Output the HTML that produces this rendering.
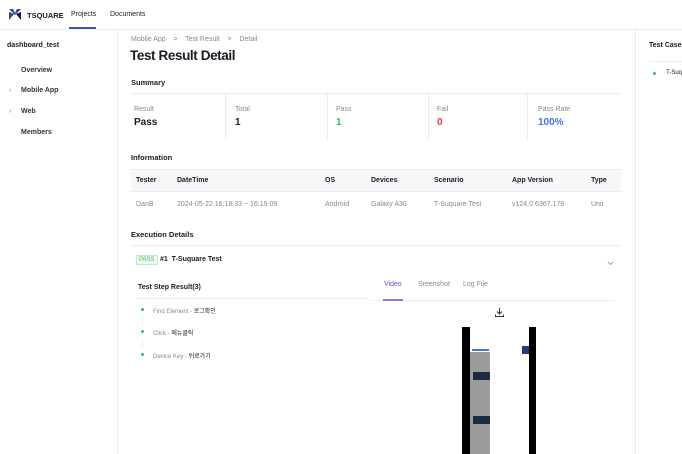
<!DOCTYPE html>
<html><head><meta charset="utf-8"><style>
*{box-sizing:border-box;margin:0;padding:0}
body{width:682px;height:454px;overflow:hidden;background:#fff;font-family:"Liberation Sans","Noto Sans CJK KR",sans-serif;color:#1a1a24;position:relative;font-size:7px}
.a{position:absolute;white-space:nowrap}
.b{font-weight:bold}
.g{color:#888}
.hl{position:absolute;height:1px;background:#ececf0}
.vl{position:absolute;width:1px;background:#ececf0}
</style></head><body>
<svg class="a" style="left:9px;top:9px" width="12" height="11" viewBox="0 0 12 11"><path d="M0 0h4l2 4 2-4h4L6 6z" fill="#2c4a8c"/><path d="M0 11 5 5 0 3z" fill="#2c4a8c"/><path d="M12 11 7 5l5-2z" fill="#1a1a24"/></svg>
<div class="a b" style="left:27px;top:11px;font-size:7.5px">TSQUARE</div>
<div class="a" style="left:71px;top:11px;font-size:7px">Projects</div>
<div class="a" style="left:69px;top:27px;width:27px;height:2px;background:#3b55b0"></div>
<div class="a" style="left:110px;top:11px;font-size:7px">Documents</div>
<div class="hl" style="left:0;top:29px;width:682px"></div>
<div class="vl" style="left:117px;top:29px;height:425px"></div>
<div class="a b" style="left:7px;top:42px;font-size:7px">dashboard_test</div>
<div class="a" style="left:21px;top:67px;font-weight:bold;color:#333">Overview</div>
<div class="a g" style="left:9px;top:87px">›</div><div class="a" style="left:21px;top:87px;font-weight:bold;color:#333">Mobile App</div>
<div class="a g" style="left:9px;top:108px">›</div><div class="a" style="left:21px;top:108px;font-weight:bold;color:#333">Web</div>
<div class="a" style="left:21px;top:129px;font-weight:bold;color:#333">Members</div>
<div class="a g" style="left:131px;top:36px">Mobile App &nbsp;&nbsp;&nbsp;&gt;&nbsp;&nbsp;&nbsp; Test Result &nbsp;&nbsp;&nbsp;&gt;&nbsp;&nbsp;&nbsp; Detail</div>
<div class="a b" style="left:130px;top:48px;font-size:13.5px;letter-spacing:-0.4px">Test Result Detail</div>
<div class="a b" style="left:131px;top:78px;font-size:7.5px">Summary</div>
<div class="hl" style="left:131px;top:93px;width:490px"></div>
<div class="vl" style="left:225px;top:93px;height:47px"></div>
<div class="vl" style="left:327px;top:93px;height:47px"></div>
<div class="vl" style="left:428px;top:93px;height:47px"></div>
<div class="vl" style="left:527px;top:93px;height:47px"></div>
<div class="a g" style="left:134px;top:106px">Result</div><div class="a b" style="left:134px;top:117px;font-size:10px">Pass</div>
<div class="a g" style="left:235px;top:106px">Total</div><div class="a b" style="left:235px;top:117px;font-size:10px">1</div>
<div class="a g" style="left:336px;top:106px">Pass</div><div class="a b" style="left:336px;top:117px;font-size:10px;color:#3cba5a">1</div>
<div class="a g" style="left:437px;top:106px">Fail</div><div class="a b" style="left:437px;top:117px;font-size:10px;color:#e03a48">0</div>
<div class="a g" style="left:538px;top:106px">Pass Rate</div><div class="a b" style="left:538px;top:117px;font-size:10px;color:#4a72e8">100%</div>
<div class="a b" style="left:131px;top:153px;font-size:7.5px">Information</div>
<div class="a" style="left:131px;top:169px;width:490px;height:23px;background:#f6f7f9;border-bottom:1px solid #ececf0"></div>
<div class="hl" style="left:131px;top:169px;width:490px"></div>
<div class="a b" style="left:136px;top:177px">Tester</div>
<div class="a b" style="left:177px;top:177px">DateTime</div>
<div class="a b" style="left:325px;top:177px">OS</div>
<div class="a b" style="left:371px;top:177px">Devices</div>
<div class="a b" style="left:434px;top:177px">Scenario</div>
<div class="a b" style="left:512px;top:177px">App Version</div>
<div class="a b" style="left:591px;top:177px">Type</div>
<div class="a g" style="left:136px;top:201px">DanB</div>
<div class="a g" style="left:177px;top:201px">2024-05-22 16:18:33 ~ 16:19:09</div>
<div class="a g" style="left:325px;top:201px">Android</div>
<div class="a g" style="left:371px;top:201px">Galaxy A30</div>
<div class="a g" style="left:434px;top:201px">T-Suquare Test</div>
<div class="a g" style="left:512px;top:201px">v124.0.6367.179</div>
<div class="a g" style="left:591px;top:201px">Unit</div>
<div class="a b" style="left:131px;top:230px;font-size:7.5px">Execution Details</div>
<div class="hl" style="left:131px;top:245px;width:490px"></div>
<div class="a" style="left:136px;top:255px;padding:1px 2px;border:1px solid #bfe8c8;background:#eefaf1;color:#3cba5a;font-size:6px">PASS</div>
<div class="a b" style="left:160px;top:256px">#1 &nbsp;T-Suquare Test</div>
<svg class="a" style="left:607px;top:261px" width="7" height="5" viewBox="0 0 7 5"><path d="M1 1l2.5 2.5L6 1" stroke="#888" fill="none" stroke-width=".8"/></svg>
<div class="a b" style="left:138px;top:284px">Test Step Result(3)</div>
<div class="hl" style="left:136px;top:298px;width:233px"></div>
<div class="a" style="left:141px;top:308px;width:3px;height:3px;border-radius:50%;background:#3cba5a"></div>
<div class="vl" style="left:142px;top:316px;height:10px"></div>
<div class="a" style="left:141px;top:330px;width:3px;height:3px;border-radius:50%;background:#3cba5a"></div>
<div class="vl" style="left:142px;top:338px;height:10px"></div>
<div class="a" style="left:141px;top:353px;width:3px;height:3px;border-radius:50%;background:#3cba5a"></div>
<div class="a" style="left:153px;top:306px;font-size:6px"><span class="g">Find Element - </span>로그확인</div>
<div class="a" style="left:153px;top:328px;font-size:6px"><span class="g">Click - </span>메뉴클릭</div>
<div class="a" style="left:153px;top:351px;font-size:6px"><span class="g">Device Key - </span>뒤로가기</div>
<div class="a" style="left:384px;top:281px;color:#6a4ce0">Video</div>
<div class="a g" style="left:418px;top:281px">Sreenshot</div>
<div class="a g" style="left:463px;top:281px">Log File</div>
<div class="hl" style="left:370px;top:300px;width:245px"></div>
<div class="a" style="left:383px;top:299px;width:20px;height:2px;background:#8d78ea"></div>
<svg class="a" style="left:493px;top:306px" width="13" height="13" viewBox="0 0 13 13"><path d="M6.5 2v6M4 5.5l2.5 2.5 2.5-2.5M2.5 8.5v2h8v-2" stroke="#333" fill="none" stroke-width="1"/></svg>
<div class="a" style="left:462px;top:327px;width:74px;height:127px;background:#000">
 <div class="a" style="left:8px;top:0;width:59px;height:127px;background:#fff"></div>
 <div class="a" style="left:8px;top:25px;width:20px;height:102px;background:#9c9c9c"></div>
 <div class="a" style="left:11px;top:45px;width:17px;height:8px;background:#1e2a40"></div>
 <div class="a" style="left:11px;top:89px;width:17px;height:8px;background:#1e2a40"></div>
 <div class="a" style="left:60px;top:19px;width:7px;height:8px;background:#223d7a"></div>
 <div class="a" style="left:10px;top:22px;width:17px;height:2px;background:#4a72e8"></div>
</div>
<div class="vl" style="left:635px;top:29px;height:425px"></div>
<div class="a b" style="left:649px;top:42px;font-size:7px">Test Case</div>
<div class="hl" style="left:649px;top:61px;width:33px"></div>
<div class="a" style="left:653px;top:72px;width:3px;height:3px;border-radius:50%;background:#3cba5a"></div>
<div class="a" style="left:666px;top:70px;font-size:6px">T-Suquare Test</div>
</body></html>
